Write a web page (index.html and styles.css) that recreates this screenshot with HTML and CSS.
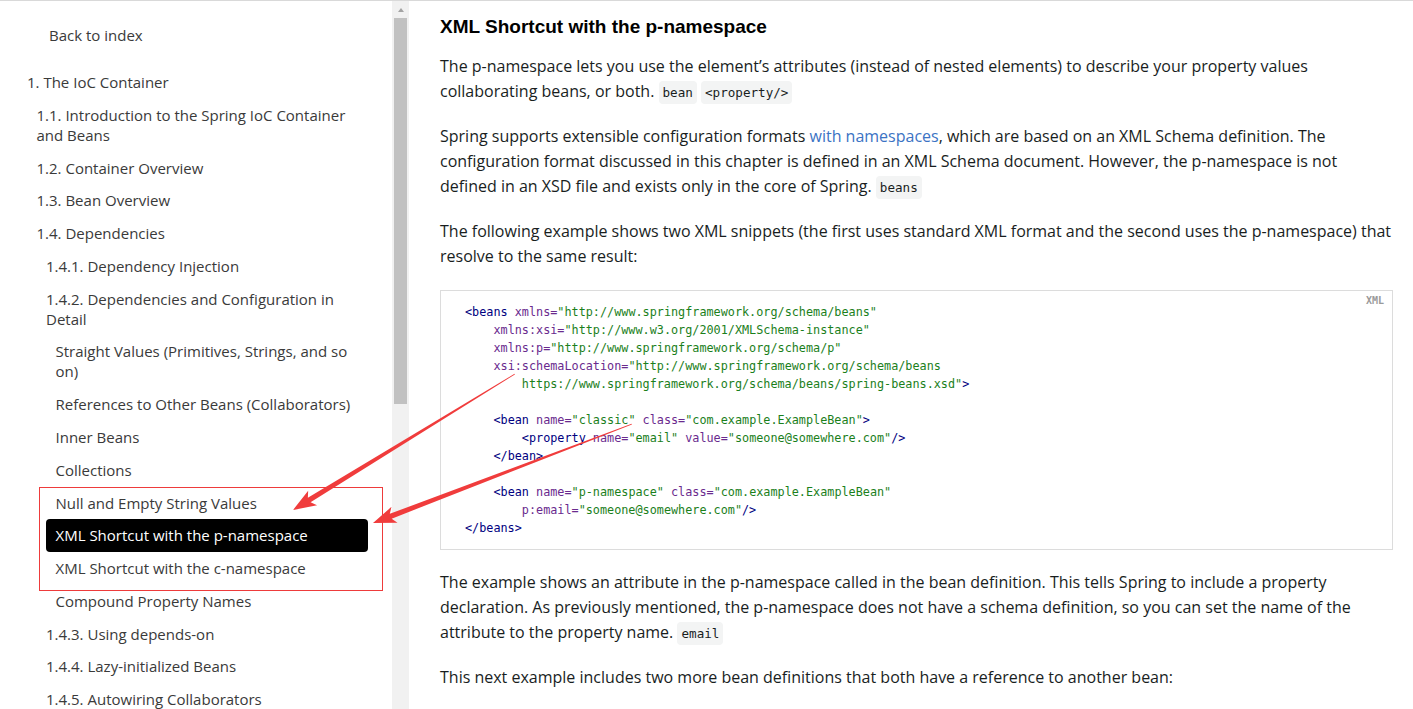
FILE: index.html
```html
<!DOCTYPE html>
<html lang="en">
<head>
<meta charset="utf-8">
<title>XML Shortcut with the p-namespace</title>
<link rel="stylesheet" href="styles.css">
</head>
<body>
<div class="page">
  <aside class="sidebar">
    <nav class="toc">
      <a class="back" href="#">Back to index</a>
      <ul>
        <li><a href="#">1. The IoC Container</a>
          <ul>
            <li><a href="#">1.1. Introduction to the Spring IoC Container and Beans</a></li>
            <li><a href="#">1.2. Container Overview</a></li>
            <li><a href="#">1.3. Bean Overview</a></li>
            <li><a href="#">1.4. Dependencies</a>
              <ul>
                <li><a href="#">1.4.1. Dependency Injection</a></li>
                <li><a href="#">1.4.2. Dependencies and Configuration in Detail</a>
                  <ul>
                    <li><a href="#">Straight Values (Primitives, Strings, and so on)</a></li>
                    <li><a href="#">References to Other Beans (Collaborators)</a></li>
                    <li><a href="#">Inner Beans</a></li>
                    <li><a href="#">Collections</a></li>
                    <li><a href="#">Null and Empty String Values</a></li>
                    <li><a class="active" href="#">XML Shortcut with the p-namespace</a></li>
                    <li><a href="#">XML Shortcut with the c-namespace</a></li>
                    <li><a href="#">Compound Property Names</a></li>
                  </ul>
                </li>
                <li><a href="#">1.4.3. Using depends-on</a></li>
                <li><a href="#">1.4.4. Lazy-initialized Beans</a></li>
                <li><a href="#">1.4.5. Autowiring Collaborators</a></li>
                <li><a href="#">1.4.6. Method Injection</a></li>
              </ul>
            </li>
          </ul>
        </li>
      </ul>
    </nav>
    <div class="scrollbar">
      <div class="sb-up"></div>
      <div class="sb-thumb"></div>
    </div>
  </aside>

  <main class="content">
    <h2>XML Shortcut with the p-namespace</h2>
    <p>The p-namespace lets you use the element’s attributes (instead of nested elements) to describe your property values collaborating beans, or both. <code>bean</code> <code>&lt;property/&gt;</code></p>
    <p>Spring supports extensible configuration formats <a class="link" href="#">with namespaces</a>, which are based on an XML Schema definition. The configuration format discussed in this chapter is defined in an XML Schema document. However, the p-namespace is not defined in an XSD file and exists only in the core of Spring. <code>beans</code></p>
    <p>The following example shows two XML snippets (the first uses standard XML format and the second uses the p-namespace) that resolve to the same result:</p>
    <div class="listing">
      <span class="lang">XML</span>
<pre><span class="t">&lt;beans</span> <span class="a">xmlns=</span><span class="v">"http://www.springframework.org/schema/beans"</span>
    <span class="a">xmlns:xsi=</span><span class="v">"http://www.w3.org/2001/XMLSchema-instance"</span>
    <span class="a">xmlns:p=</span><span class="v">"http://www.springframework.org/schema/p"</span>
    <span class="a">xsi:schemaLocation=</span><span class="v">"http://www.springframework.org/schema/beans
        https://www.springframework.org/schema/beans/spring-beans.xsd"</span><span class="t">&gt;</span>

    <span class="t">&lt;bean</span> <span class="a">name=</span><span class="v">"classic"</span> <span class="a">class=</span><span class="v">"com.example.ExampleBean"</span><span class="t">&gt;</span>
        <span class="t">&lt;property</span> <span class="a">name=</span><span class="v">"email"</span> <span class="a">value=</span><span class="v">"someone@somewhere.com"</span><span class="t">/&gt;</span>
    <span class="t">&lt;/bean&gt;</span>

    <span class="t">&lt;bean</span> <span class="a">name=</span><span class="v">"p-namespace"</span> <span class="a">class=</span><span class="v">"com.example.ExampleBean"</span>
        <span class="a">p:email=</span><span class="v">"someone@somewhere.com"</span><span class="t">/&gt;</span>
<span class="t">&lt;/beans&gt;</span></pre>
    </div>
    <p>The example shows an attribute in the p-namespace called in the bean definition. This tells Spring to include a property declaration. As previously mentioned, the p-namespace does not have a schema definition, so you can set the name of the attribute to the property name. <code>email</code></p>
    <p>This next example includes two more bean definitions that both have a reference to another bean:</p>
  </main>
</div>

<div class="annot-box"></div>
<svg class="annot-arrows" width="1413" height="709" viewBox="0 0 1413 709">
  <polygon class="arrow" transform="translate(293 510) rotate(148.5)" points="-260,-0.4 -19,-2.6 -23,-8.5 0,0 -23,8.5 -19,2.6 -260,0.4"/>
  <polygon class="arrow" transform="translate(373 523) rotate(159.1)" points="-277,-0.4 -19,-2.6 -23,-8.5 0,0 -23,8.5 -19,2.6 -277,0.4"/>
</svg>
</body>
</html>
```

FILE: styles.css
```css
html, body {
  margin: 0;
  padding: 0;
}

body {
  position: relative;
  width: 1413px;
  height: 709px;
  overflow: hidden;
  background: #fff;
  font-family: "Open Sans", "Noto Sans", sans-serif;
}

.page {
  display: flex;
  height: 709px;
  box-sizing: border-box;
  border-top: 1px solid #d9d9d9;
}

/* ---------- sidebar ---------- */
.sidebar {
  flex: 0 0 409px;
  display: flex;
  height: 100%;
}

.toc {
  flex: 1;
  overflow: hidden;
  padding: 17.6px 24px 0 17px;
  font-size: 15px;
  line-height: 20px;
  color: #3a3a3a;
}

.toc a {
  display: block;
  padding: 6.4px 10px;
  border-radius: 4px;
  color: inherit;
  text-decoration: none;
}

.toc .back {
  padding-left: 32px;
  margin-bottom: 14.2px;
}

.toc ul {
  list-style: none;
  margin: 0;
  padding: 0;
}

.toc ul ul {
  padding-left: 9.5px;
}

.toc a.active {
  background: #000;
  color: #fff;
}

.scrollbar {
  flex: 0 0 17px;
  display: flex;
  flex-direction: column;
  background: #f1f1f1;
}

.sb-up {
  height: 17px;
  display: flex;
  align-items: center;
  justify-content: center;
}

.sb-up::before {
  content: "";
  border-left: 3.5px solid transparent;
  border-right: 3.5px solid transparent;
  border-bottom: 4px solid #a3a3a3;
}

.sb-thumb {
  height: 386px;
  margin: 0 2px;
  background: #c1c1c1;
}

/* ---------- main content ---------- */
.content {
  flex: 1;
  min-width: 0;
  overflow: hidden;
  padding: 0 20px 0 31px;
  color: #191e1e;
  font-size: 16px;
  line-height: 25px;
}

.content h2 {
  margin: 14px 0 14.5px;
  font-family: "Liberation Sans", Arial, sans-serif;
  font-size: 19px;
  line-height: 24px;
  font-weight: bold;
  color: #000;
}

.content p {
  margin: 0 0 20px;
}

.link {
  color: #3b73c4;
  text-decoration: none;
}

code {
  font-family: "DejaVu Sans Mono", "Liberation Mono", monospace;
  font-size: 12.6px;
  line-height: 1;
  background: #f3f4f4;
  padding: 4px 4px;
  border-radius: 4px;
  color: #191e1e;
}

.listing {
  position: relative;
  margin: 21.5px 0 20px;
  padding: 12px 24px 12px;
  border: 1px solid #dcdcdc;
  background: #fff;
}

.listing pre {
  margin: 0;
  font-family: "DejaVu Sans Mono", "Liberation Mono", monospace;
  font-size: 11.8px;
  line-height: 18px;
  color: #191e1e;
}

.listing .lang {
  position: absolute;
  top: 4px;
  right: 8px;
  font-family: "DejaVu Sans Mono", monospace;
  font-size: 10px;
  line-height: 12px;
  font-weight: bold;
  color: #9a9a9a;
}

.t { color: #000080; }
.a { color: #6a2a8e; }
.v { color: #1b801b; }

/* ---------- annotations ---------- */
.annot-box {
  position: absolute;
  left: 39px;
  top: 487px;
  width: 344px;
  height: 104px;
  box-sizing: border-box;
  border: 1px solid #ee3b3b;
  pointer-events: none;
}

.annot-arrows {
  position: absolute;
  left: 0;
  top: 0;
  pointer-events: none;
}

.arrow {
  fill: #f03c3c;
}
```
